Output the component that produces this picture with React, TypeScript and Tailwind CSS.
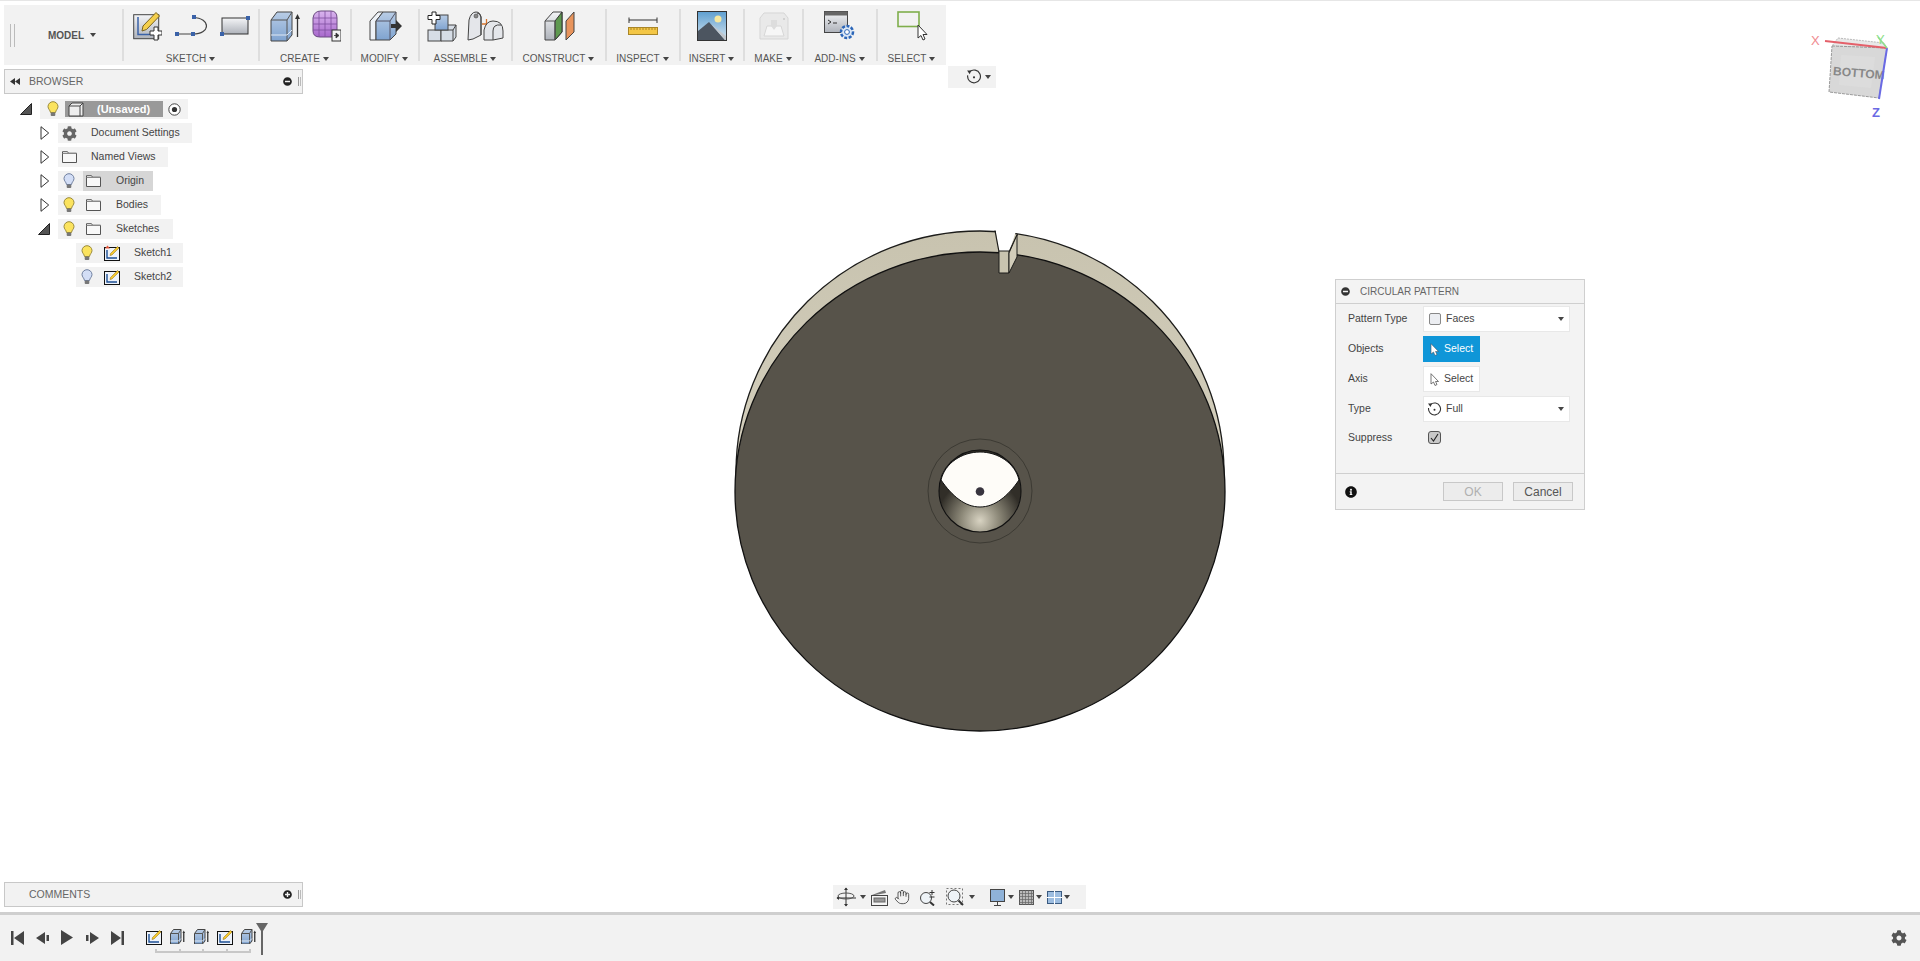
import type { ReactNode } from "react";
import { FaCog, FaInfoCircle, FaMinusCircle, FaPlusCircle } from "react-icons/fa";
import { Hand } from "lucide-react";

function Ico({ w, h, children, className }: { w: number; h: number; children: ReactNode; className?: string }) {
  return (
    <svg width={w} height={h} viewBox={`0 0 ${w} ${h}`} className={`shrink-0 ${className ?? ""}`}>
      {children}
    </svg>
  );
}

function Caret({ className }: { className?: string }) {
  return (
    <Ico w={6} h={4} className={className}>
      <path d="M0 0H6L3 4Z" fill="#444" />
    </Ico>
  );
}

function Defs() {
  return (
    <svg className="absolute w-0 h-0">
      <defs>
        <linearGradient id="blueBox" x1="0" y1="0" x2="0" y2="1">
          <stop offset="0" stopColor="#b9cde6" />
          <stop offset="1" stopColor="#7fa3d0" />
        </linearGradient>
        <linearGradient id="greyBox" x1="0" y1="0" x2="0" y2="1">
          <stop offset="0" stopColor="#f4f5f7" />
          <stop offset="1" stopColor="#aeb2ba" />
        </linearGradient>
        <linearGradient id="purple" x1="0" y1="0" x2="0" y2="1">
          <stop offset="0" stopColor="#d9b4ee" />
          <stop offset="1" stopColor="#a868cc" />
        </linearGradient>
        <linearGradient id="sky" x1="0" y1="0" x2="0" y2="1">
          <stop offset="0" stopColor="#5f9fd0" />
          <stop offset="1" stopColor="#d6e6f0" />
        </linearGradient>
        <radialGradient id="hole" cx="0.5" cy="0.86" r="0.52">
          <stop offset="0" stopColor="#d8d3c2" />
          <stop offset="0.45" stopColor="#8c8878" />
          <stop offset="1" stopColor="#312e28" />
        </radialGradient>
        <linearGradient id="rim" x1="0" y1="1" x2="0" y2="0">
          <stop offset="0.5" stopColor="#d4cfbd" />
          <stop offset="1" stopColor="#c8c3af" />
        </linearGradient>
      </defs>
    </svg>
  );
}

/* small tree icons */
function Bulb({ off }: { off?: boolean }) {
  return (
    <Ico w={12} h={16}>
      <path
        d="M6 .7A5 5 0 0 1 11 5.5C11 8 8.8 9 8.5 11.5H3.5C3.2 9 1 8 1 5.5A5 5 0 0 1 6 .7Z"
        fill={off ? "#d3def6" : "#fbe35e"}
        stroke={off ? "#6f7f9f" : "#9a8a3a"}
      />
      <rect x="3.7" y="11.5" width="4.6" height="3.6" rx="1" fill="#777" />
    </Ico>
  );
}

function Folder() {
  return (
    <Ico w={15} h={12}>
      <path d="M.5 11.5V.7H5.5L6.5 2.2H14.5V11.5Z" fill="#f8f8f8" stroke="#555" />
      <path d="M.5 2.5H14.5" stroke="#888" />
    </Ico>
  );
}

function SketchSmall({ warn, w = 16 }: { warn?: boolean; w?: number }) {
  return (
    <Ico w={w} h={16}>
      <rect x=".5" y="2.5" width="15" height="13" fill="#eef3fa" stroke="#111" />
      <path d="M3 5V13H13" stroke="#1d4f94" strokeWidth="1.4" fill="none" />
      <path d="M6 10.5L6.5 8.5L13.5 1.5L15 3L8 10Z" fill="#f6c92e" stroke="#8a6a10" strokeWidth=".5" />
      {warn && <path d="M1 3.5L3.5 .5L6 3.5Z" fill="#e5583c" />}
    </Ico>
  );
}

function Tri({ open }: { open?: boolean }) {
  return open ? (
    <Ico w={12} h={12}>
      <path d="M.5 11.5L11.5 .5V11.5Z" fill="#555" stroke="#222" />
    </Ico>
  ) : (
    <Ico w={10} h={14}>
      <path d="M1 .7L8.7 7L1 13.3Z" fill="#fff" stroke="#333" />
    </Ico>
  );
}

function TreeRow({
  indent,
  tri,
  open,
  bulb,
  off,
  icon,
  label,
  width,
  active,
}: {
  indent: number;
  tri?: boolean;
  open?: boolean;
  bulb?: boolean;
  off?: boolean;
  icon: ReactNode;
  label: string;
  width: number;
  active?: boolean;
}) {
  return (
    <div className="flex items-center h-5" style={{ paddingLeft: indent }}>
      <div className="w-[20px] flex justify-end pr-[8px] shrink-0">{tri && <Tri open={open} />}</div>
      <div className="flex items-center h-5 bg-[#f2f2f2]" style={{ width }}>
        {bulb && (
          <div className="w-[25px] flex justify-center pr-[3px] shrink-0">
            <Bulb off={off} />
          </div>
        )}
        <div className={`flex items-center h-5 grow ${bulb ? "" : "pl-[3px]"} ${active ? "bg-[#d6d6d6]" : ""}`}>
          <div className={`flex justify-center shrink-0 ${bulb ? "w-[20px] pl-[1px]" : "w-[17px]"}`}>{icon}</div>
          <span className="ml-[13px] text-[10.5px] text-[#444]">{label}</span>
        </div>
      </div>
    </div>
  );
}

function Tree() {
  return (
    <div className="flex flex-col gap-1 pt-[5px]">
      <div className="flex items-center h-5 pl-[16px]">
        <div className="w-[20px] shrink-0">
          <Tri open />
        </div>
        <div className="flex items-center h-5 w-[148px] bg-[#f2f2f2]">
          <div className="w-[25px] flex justify-center shrink-0">
            <Bulb />
          </div>
          <div className="flex items-center h-4 w-[98px] bg-[#999]">
            <Ico w={16} h={15} className="ml-[3px]">
              <path d="M1 14V4L4 1H15V14Z" fill="#eee" stroke="#444" />
              <path d="M1 4H12V14M12 4L15 1" fill="none" stroke="#444" />
            </Ico>
            <span className="ml-[13px] text-[11px] font-bold text-white">(Unsaved)</span>
          </div>
          <Ico w={13} h={13} className="ml-[5px]">
            <circle cx="6.5" cy="6.5" r="5.7" fill="#fff" stroke="#444" />
            <circle cx="6.5" cy="6.5" r="2.6" fill="#333" />
          </Ico>
        </div>
      </div>
      <TreeRow indent={34} tri icon={<FaCog size={15} color="#666" />} label="Document Settings" width={134} />
      <TreeRow indent={34} tri icon={<Folder />} label="Named Views" width={110} />
      <TreeRow indent={34} tri bulb off active icon={<Folder />} label="Origin" width={95} />
      <TreeRow indent={34} tri bulb icon={<Folder />} label="Bodies" width={103} />
      <TreeRow indent={34} tri open bulb icon={<Folder />} label="Sketches" width={115} />
      <TreeRow indent={52} bulb icon={<SketchSmall warn />} label="Sketch1" width={107} />
      <TreeRow indent={52} bulb off icon={<SketchSmall />} label="Sketch2" width={107} />
    </div>
  );
}

function PanelBar({ label, icon, left }: { label: string; icon: ReactNode; left?: ReactNode }) {
  return (
    <div className="flex items-center h-[25px] w-[299px] border border-[#c8c8c8] bg-[#f2f2f2]">
      <div className="w-[24px] pl-[5px] shrink-0">{left}</div>
      <span className="text-[10.5px] text-[#666]">{label}</span>
      <div className="ml-auto mr-[6px]">{icon}</div>
      <div className="flex gap-[1px] mr-[1px]">
        <div className="w-px h-[9px] bg-[#999]" />
        <div className="w-px h-[9px] bg-[#bbb]" />
      </div>
    </div>
  );
}

/* toolbar icons */
function SketchCreate() {
  return (
    <Ico w={29} h={30}>
      <rect x=".7" y="3.7" width="25" height="24" fill="url(#greyBox)" stroke="#444" />
      <path d="M5 6V23.5H20" stroke="#3a62a8" strokeWidth="1.5" fill="none" />
      <path d="M9 20L10 15L23 1.5L26.5 5L13.5 18.5Z" fill="#f4cf4c" stroke="#7a6320" />
      <path d="M17 20H21V16H25V20H29V24H25V29H21V24H17Z" fill="#fff" stroke="#333" />
    </Ico>
  );
}

function LineArc() {
  return (
    <Ico w={32} h={22}>
      <path d="M2 19H18M18 2.5C36 3 36 19 18 19" fill="none" stroke="#444" strokeWidth="1.2" />
      <rect x="0" y="17" width="4" height="4" fill="#3a62a8" />
      <rect x="16" y="17" width="4" height="4" fill="#3a62a8" />
      <rect x="17" y="0" width="4" height="4" fill="#3a62a8" />
    </Ico>
  );
}

function RectIcon() {
  return (
    <Ico w={30} h={22}>
      <rect x="2" y="3" width="26" height="16" fill="url(#greyBox)" stroke="#333" />
      <rect x="0" y="17" width="4" height="4" fill="#3a62a8" />
      <rect x="26" y="1" width="4" height="4" fill="#3a62a8" />
    </Ico>
  );
}

function Extrude({ scale = 1 }: { scale?: number }) {
  const w = 31 * scale;
  const h = 31 * scale;
  return (
    <svg width={w} height={h} viewBox="0 0 31 31" className="shrink-0">
      <path d="M1 9L7 1H22V24L17 30H1Z" fill="url(#blueBox)" stroke="#444" strokeWidth={1 / scale} />
      <path d="M1 9H17V30M17 9L22 1" fill="none" stroke="#555" strokeWidth={1 / scale} />
      <path d="M1 24H17L22 19" fill="none" stroke="#dfe8f2" strokeWidth={1 / scale} />
      <path d="M27.5 26V6" stroke="#333" strokeWidth={1.3 / scale} />
      <path d="M25 8L27.5 3L30 8Z" fill="#333" />
    </svg>
  );
}

function Mesh() {
  return (
    <Ico w={29} h={32}>
      <path d="M1 8Q2 1 9 1H19Q25 1 25 8V22Q25 27 19 27H8Q1 27 1 21Z" fill="url(#purple)" stroke="#6a4a80" />
      <path d="M7 1.5V27M13 1V27M19 1V27M1 8H25M1 14H25M1 20H25" stroke="#7d4fa0" strokeWidth=".8" fill="none" />
      <rect x="20" y="20" width="9" height="11" fill="#f4f4f4" stroke="#333" />
      <path d="M22 25.5H25M24 23L27 25.5L24 28Z" fill="#333" stroke="#333" strokeWidth=".8" />
    </Ico>
  );
}

function Modify() {
  return (
    <Ico w={33} h={31}>
      <path d="M1 29V10L9 1H14L7 10V29Z" fill="#eef2f7" stroke="#444" />
      <path d="M7 29V10L14 1H27V23L21 29Z" fill="url(#blueBox)" stroke="#444" />
      <path d="M7 10H21V29M21 10L27 1" fill="none" stroke="#556" />
      <path d="M22 13H27V9L33 15L27 21V17H22Z" fill="#333" />
    </Ico>
  );
}

function NewComponent() {
  return (
    <Ico w={30} h={31}>
      <rect x="1" y="19" width="13" height="11" fill="#d6dde6" stroke="#444" />
      <path d="M14 30V19L20 14H29V26L26 30Z" fill="#d6dde6" stroke="#444" />
      <path d="M14 19H26V30M26 19L29 14" fill="none" stroke="#444" />
      <rect x="8" y="4" width="13" height="15" fill="url(#blueBox)" stroke="#444" />
      <path d="M5 1H9V4.500H13V8.500H9V13H5V8.500H1V4.500H5Z" fill="#fff" stroke="#222" />
    </Ico>
  );
}

function Joint() {
  return (
    <Ico w={37} h={30}>
      <path d="M1 29L2 9Q4 1 9 1Q13 1 14 6V24L6 28Z" fill="#e4e6ea" stroke="#444" />
      <path d="M14 24V6Q13 2 10 2" fill="none" stroke="#444" />
      <circle cx="9" cy="5" r="2" fill="#888" stroke="#444" strokeWidth=".6" />
      <path d="M15 13H24M19.500 8V25" stroke="#d9762e" strokeWidth="1.3" />
      <path d="M17 29V19Q19 10 26 10Q36 10 36 20V27L26 29Z" fill="#e4e6ea" stroke="#444" />
      <path d="M26 29V20Q26 13 34 14" fill="none" stroke="#444" />
    </Ico>
  );
}

function Construct() {
  return (
    <Ico w={31} h={30}>
      <path d="M1 29V10L9 1H18V21L11 29Z" fill="url(#greyBox)" stroke="#444" />
      <path d="M11 10L18 1V21L11 29Z" fill="#5e9950" stroke="#333" />
      <path d="M1 10H11V29" fill="none" stroke="#555" />
      <path d="M22 29V10L30 1V21Z" fill="#e8945c" stroke="#444" />
    </Ico>
  );
}

function Ruler() {
  return (
    <Ico w={30} h={18}>
      <path d="M1 3H29M1 .5V6M29 .5V6" stroke="#333" fill="none" />
      <rect x=".5" y="10.500" width="29" height="7" fill="#f4c746" stroke="#a98628" />
      <path d="M3 11V13M6 11V13M9 11V13M12 11V13M15 11V13M18 11V13M21 11V13M24 11V13M27 11V13" stroke="#8a6a18" strokeWidth=".7" />
    </Ico>
  );
}

function Picture() {
  return (
    <Ico w={30} h={30}>
      <rect x=".5" y=".5" width="29" height="29" fill="url(#sky)" stroke="#333" />
      <circle cx="21" cy="8" r="3.500" fill="#f6e8a0" />
      <path d="M1 29V20L12 11L28 29Z" fill="#4c5560" />
      <path d="M14 13L29 25V29H28Z" fill="#c0c6cc" />
    </Ico>
  );
}

function Make() {
  return (
    <Ico w={30} h={28} className="opacity-80">
      <path d="M1 27V6L5 1H25L29 6V27Z" fill="#e8e8e8" stroke="#cfcfcf" />
      <path d="M5 24L8 14H22L25 24Z" fill="#f8f8f8" stroke="#d0d0d0" />
      <path d="M12 8H18V14L15 18L12 14Z" fill="#d8d8d8" />
      <circle cx="25" cy="7" r="1" fill="#c0c0c0" />
    </Ico>
  );
}

function AddIns() {
  return (
    <Ico w={32} h={30}>
      <rect x=".5" y=".5" width="23" height="21" fill="url(#greyBox)" stroke="#444" />
      <rect x=".5" y=".5" width="23" height="4" fill="#666" />
      <path d="M4 9L7 11L4 13M9 12H13" fill="none" stroke="#333" />
      <g transform="translate(23 21)">
        <circle r="6" fill="#dce8f6" stroke="#2c66b8" strokeWidth="2.500" strokeDasharray="3 1.500" />
        <circle r="2.400" fill="#fff" stroke="#2c66b8" />
      </g>
    </Ico>
  );
}

function SelectIcon() {
  return (
    <Ico w={31} h={31}>
      <rect x="1" y="1" width="21" height="14.500" fill="none" stroke="#7fae4c" strokeWidth="1.600" />
      <path d="M21 14V27L24 24.500L26 29L28 28L26 23.500H30Z" fill="#fff" stroke="#333" />
    </Ico>
  );
}

function Group({ label, width, children, gap }: { label: string; width: number; children: ReactNode; gap: number }) {
  return (
    <div className="flex items-stretch shrink-0" style={{ width }}>
      <div className="w-[2px] my-[4px] bg-[#dedede] shrink-0" />
      <div className="flex flex-col items-center grow">
        <div className="flex items-center justify-center h-[40px] mt-[1px]" style={{ gap }}>
          {children}
        </div>
        <div className="flex items-center gap-[3px] mt-[6px] pr-[1px]">
          <span className="text-[10px] text-[#555] leading-[13px]">{label}</span>
          <Caret />
        </div>
      </div>
    </div>
  );
}

function Toolbar() {
  return (
    <div className="flex w-[942px] h-[60px] bg-[#f2f2f2] shrink-0">
      <div className="flex items-center w-[118px] shrink-0 pl-[6px]">
        <div className="flex gap-[3px]">
          <div className="w-px h-[23px] bg-[#bbb]" />
          <div className="w-px h-[23px] bg-[#bbb]" />
        </div>
        <span className="ml-[33px] text-[10px] font-bold text-[#555]">MODEL</span>
        <Caret className="ml-[6px]" />
      </div>
      <Group label="SKETCH" width={136} gap={13}>
        <SketchCreate />
        <LineArc />
        <RectIcon />
      </Group>
      <Group label="CREATE" width={92} gap={11}>
        <Extrude />
        <Mesh />
      </Group>
      <Group label="MODIFY" width={68} gap={0}>
        <Modify />
      </Group>
      <Group label="ASSEMBLE" width={93} gap={10}>
        <NewComponent />
        <Joint />
      </Group>
      <Group label="CONSTRUCT" width={94} gap={0}>
        <Construct />
      </Group>
      <Group label="INSPECT" width={74} gap={0}>
        <Ruler />
      </Group>
      <Group label="INSERT" width={64} gap={0}>
        <Picture />
      </Group>
      <Group label="MAKE" width={59} gap={0}>
        <Make />
      </Group>
      <Group label="ADD-INS" width={74} gap={0}>
        <AddIns />
      </Group>
      <Group label="SELECT" width={70} gap={0}>
        <SelectIcon />
      </Group>
    </div>
  );
}

function RotateMark({ size = 15 }: { size?: number }) {
  return (
    <svg width={size} height={size} viewBox="0 0 15 15" className="shrink-0">
      <path d="M3.500 2.500A6 6 0 1 1 1.600 6" fill="none" stroke="#333" strokeWidth="1.100" />
      <path d="M1 1.500L5 1.500L3.500 5Z" fill="#333" />
      <circle cx="7.500" cy="7.800" r="1" fill="#333" />
    </svg>
  );
}

/* the part on the canvas */
function Model() {
  return (
    <svg className="absolute left-0 top-0" width={1920} height={961} viewBox="0 0 1920 961">
      <ellipse cx="980" cy="471" rx="244" ry="241" fill="url(#rim)" stroke="#1c1c1a" strokeWidth="1.300" />
      <path d="M995 225L999 251H1009L1017.500 226Z" fill="#fff" />
      <path d="M995 229.500L999 251M1009 251L1017.500 233" stroke="#1c1c1a" strokeWidth="1.200" fill="none" />
      <ellipse cx="980" cy="490.500" rx="245" ry="239.500" fill="#57534a" stroke="#111" strokeWidth="1.300" />
      <path d="M999 250H1009V272H999Z" fill="#c9c4b0" stroke="#1c1c1a" />
      <path d="M1009 252L1017 234V256L1009 272Z" fill="#d2cdba" stroke="#1c1c1a" />
      <circle cx="980" cy="490" r="52" fill="none" stroke="#3c3a33" strokeWidth="1" />
      <circle cx="980" cy="490" r="41" fill="url(#hole)" stroke="#111" strokeWidth="1.100" />
      <path
        d="M941 479C945 462 962 451 980 451C998 451 1015 462 1019 479C1008 495 995 506 980 506C965 506 952 495 941 479Z"
        fill="#fefcf8"
        stroke="#111"
        strokeWidth="1"
      />
      <circle cx="980" cy="490.500" r="4.300" fill="#38343e" />
    </svg>
  );
}

function ViewCube() {
  return (
    <svg className="absolute left-[1805px] top-[25px]" width={95} height={100} viewBox="1805 25 95 100">
      <path d="M1838 37L1884 42L1887 47L1832 45Z" fill="#e8e8e8" stroke="#bbb" strokeDasharray="2 1" />
      <path d="M1832 45L1887 47L1879 97L1829 91Z" fill="#d8d8d8" stroke="#999" strokeDasharray="3 1" />
      <path d="M1841 54L1875 56L1871 87L1839 84Z" fill="#dcdcdc" />
      <text x="1833" y="76" fontSize="12" fontWeight="700" fill="#888" fontFamily="Liberation Sans" transform="rotate(5 1857 72)">
        BOTTOM
      </text>
      <path d="M1825 40L1887 47" stroke="#e4606a" strokeWidth="2" />
      <path d="M1887 47L1879 98" stroke="#6a6ae4" strokeWidth="2" />
      <path d="M1887 47L1878 36" stroke="#8ee08a" strokeWidth="1.500" />
      <text x="1811" y="44" fontSize="13" fill="#f08a90" fontFamily="Liberation Sans">X</text>
      <text x="1876" y="43" fontSize="13" fill="#8ee08a" fontFamily="Liberation Sans">Y</text>
      <text x="1872" y="116" fontSize="13" fontWeight="700" fill="#6a6ae4" fontFamily="Liberation Sans">Z</text>
    </svg>
  );
}

function Dialog() {
  const label = "w-[75px] text-[10.5px] text-[#444] shrink-0";
  const input = "flex items-center h-[26px] bg-white border border-[#e8e8e8]";
  return (
    <div className="absolute left-[1335px] top-[278px] w-[250px] h-[231px] flex flex-col border border-[#cfcfcf] bg-[#f3f3f3]">
      <div className="flex items-center h-[24px] border-b border-[#cfcfcf] pl-[5px] pb-[1px] shrink-0">
        <FaMinusCircle size={9} color="#333" />
        <span className="ml-[10px] text-[10px] text-[#666]">CIRCULAR PATTERN</span>
      </div>
      <div className="flex flex-col gap-[4px] pl-[12px] pt-[2px] grow">
        <div className="flex items-center">
          <span className={label}>Pattern Type</span>
          <div className={`${input} w-[147px] pl-[5px]`}>
            <div className="w-[12px] h-[12px] rounded-[2px] border border-[#888] bg-[#eceef2]" />
            <span className="ml-[5px] text-[10.5px] text-[#444]">Faces</span>
            <Caret className="ml-auto mr-[5px]" />
          </div>
        </div>
        <div className="flex items-center">
          <span className={label}>Objects</span>
          <div className="flex items-center h-[26px] w-[57px] bg-[#0f96d8] pl-[7px]">
            <Ico w={9} h={13}>
              <path d="M1 .7V11L3.500 9L5 12.500L7 11.500L5.500 8.500H8.500Z" fill="#fff" stroke="#456" strokeWidth=".6" />
            </Ico>
            <span className="ml-[5px] text-[10.5px] text-white">Select</span>
          </div>
        </div>
        <div className="flex items-center">
          <span className={label}>Axis</span>
          <div className={`${input} w-[57px] pl-[6px]`}>
            <Ico w={9} h={13}>
              <path d="M1 .7V11L3.500 9L5 12.500L7 11.500L5.500 8.500H8.500Z" fill="#fff" stroke="#555" strokeWidth=".8" />
            </Ico>
            <span className="ml-[5px] text-[10.5px] text-[#444]">Select</span>
          </div>
        </div>
        <div className="flex items-center">
          <span className={label}>Type</span>
          <div className={`${input} w-[147px] pl-[3px]`}>
            <RotateMark />
            <span className="ml-[4px] text-[10.5px] text-[#444]">Full</span>
            <Caret className="ml-auto mr-[5px]" />
          </div>
        </div>
        <div className="flex items-center mt-[4px]">
          <span className={label}>Suppress</span>
          <div className="flex items-center justify-center w-[13px] h-[13px] ml-[5px] rounded-[3px] border border-[#555] bg-[#c8c8c8]">
            <Ico w={9} h={9}>
              <path d="M1 5L3.500 8L8 1" fill="none" stroke="#222" strokeWidth="1.100" />
            </Ico>
          </div>
        </div>
      </div>
      <div className="flex items-center h-[36px] border-t border-[#cfcfcf] pl-[9px] pr-[11px] shrink-0">
        <FaInfoCircle size={12} color="#111" />
        <div className="ml-auto flex items-center justify-center w-[60px] h-[19px] border border-[#c8c8c8] bg-[#ececec] text-[12px] text-[#b0b0b0]">OK</div>
        <div className="ml-[10px] flex items-center justify-center w-[60px] h-[19px] border border-[#c8c8c8] bg-[#ececec] text-[12px] text-[#555]">Cancel</div>
      </div>
    </div>
  );
}

function NavBar() {
  return (
    <div className="absolute left-[833px] top-[884px] w-[253px] h-[24px] flex items-center bg-[#f2f2f2] pl-[3px]">
      <Ico w={22} h={20}>
        <path d="M10 1V19M1 11H20" stroke="#333" />
        <path d="M8 3L10 .5L12 3ZM3 9L.5 11L3 13ZM8 17L10 19.500L12 17Z" fill="#333" />
        <ellipse cx="10" cy="9" rx="8" ry="3" fill="none" stroke="#555" />
      </Ico>
      <Caret className="ml-[2px]" />
      <Ico w={18} h={17} className="ml-[5px]">
        <rect x=".5" y="6.500" width="16" height="10" fill="#f4f4f4" stroke="#444" />
        <rect x="3" y="9" width="11" height="4" fill="#999" stroke="#666" />
        <path d="M1 6L14 1L15 4L4 6Z" fill="#777" />
      </Ico>
      <Hand size={16} strokeWidth={1.2} color="#333" className="ml-[5px] shrink-0" />
      <Ico w={18} h={17} className="ml-[9px]">
        <circle cx="7" cy="9" r="5.500" fill="#eef3f7" stroke="#444" />
        <path d="M11 13L15 16.500" stroke="#333" strokeWidth="2" />
        <path d="M13 1V6M10.500 3.500H15.500M10.500 8H15.500" stroke="#333" />
      </Ico>
      <Ico w={18} h={18} className="ml-[9px]">
        <rect x=".5" y=".5" width="16" height="16" fill="none" stroke="#777" strokeDasharray="2 2" />
        <circle cx="8" cy="8" r="6" fill="#eef3f7" stroke="#444" />
        <path d="M12.500 12.500L17 17" stroke="#333" strokeWidth="2" />
      </Ico>
      <Caret className="ml-[5px]" />
      <Ico w={15} h={17} className="ml-[15px]">
        <rect x=".5" y=".5" width="14" height="12" fill="#8fb2d8" stroke="#444" />
        <path d="M7.500 13V16M4 16.500H11" stroke="#444" />
      </Ico>
      <Caret className="ml-[3px]" />
      <Ico w={15} h={15} className="ml-[5px]">
        <rect x=".5" y=".5" width="14" height="14" fill="#bbb" stroke="#555" />
        <path d="M3.500 0V15M6.500 0V15M9.500 0V15M12.500 0V15M0 3.500H15M0 6.500H15M0 9.500H15M0 12.500H15" stroke="#666" strokeWidth=".7" />
      </Ico>
      <Caret className="ml-[2px]" />
      <Ico w={15} h={13} className="ml-[5px]">
        <rect x=".5" y=".5" width="14" height="12" fill="#9dbde0" stroke="#3a5a80" />
        <path d="M7.500 0V13M0 6.500H15" stroke="#fff" />
      </Ico>
      <Caret className="ml-[2px]" />
    </div>
  );
}

function Playback() {
  const step = "w-[24px] flex justify-center";
  return (
    <div className="flex items-center h-[16px] pl-[5px] shrink-0">
      <div className={step}>
        <Ico w={13} h={14}>
          <path d="M0 0H2.500V14H0ZM13 0V14L3 7Z" fill="#444" />
        </Ico>
      </div>
      <div className={`${step} ml-[1px]`}>
        <Ico w={13} h={14}>
          <path d="M9 1V13L0 7ZM10.500 4H13V10H10.500Z" fill="#444" />
        </Ico>
      </div>
      <div className={`${step} ml-[1px]`}>
        <Ico w={12} h={15}>
          <path d="M0 0L12 7.500L0 15Z" fill="#444" />
        </Ico>
      </div>
      <div className={`${step} ml-[1px]`}>
        <Ico w={13} h={14}>
          <path d="M4 1V13L13 7ZM0 4H2.500V10H0Z" fill="#444" />
        </Ico>
      </div>
      <div className={`${step} ml-[1px]`}>
        <Ico w={13} h={14}>
          <path d="M0 0L10 7L0 14ZM10.500 0H13V14H10.500Z" fill="#444" />
        </Ico>
      </div>
    </div>
  );
}

function Timeline() {
  return (
    <div className="flex items-center h-[49px] shrink-0 border-t-[3px] border-[#cfcfcf] bg-[#f2f2f2] pb-[1px]">
      <Playback />
      <div className="relative flex items-center gap-[8px] ml-[17px] -mt-[2px]">
        <SketchSmall />
        <Extrude scale={0.5} />
        <Extrude scale={0.5} />
        <SketchSmall />
        <Extrude scale={0.5} />
        {/* connector under the features */}
        <div className="absolute left-[9px] top-[20px] w-[96px] h-[4px] flex justify-between border-b-2 border-[#c8c8c8]">
          <div className="w-[2px] bg-[#c8c8c8]" />
          <div className="w-[2px] bg-[#c8c8c8]" />
          <div className="w-[2px] bg-[#c8c8c8]" />
          <div className="w-[2px] bg-[#c8c8c8]" />
          <div className="w-[2px] bg-[#c8c8c8]" />
        </div>
        {/* position marker */}
        <svg className="absolute left-[110px] -top-[6px]" width={12} height={32} viewBox="0 0 12 32">
          <path d="M0 0H12L7 8V32H5V8Z" fill="#666" />
        </svg>
      </div>
      <FaCog size={16} color="#555" className="ml-auto mr-[13px]" />
    </div>
  );
}

export default function App() {
  return (
    <div className="relative flex flex-col w-full h-[961px] overflow-hidden bg-white border-t border-[#e6e6e6] font-['Liberation_Sans',sans-serif]">
      <Defs />
      <Model />
      <ViewCube />
      <div className="relative flex flex-col flex-1 min-h-0 pl-1 pt-1">
        <Toolbar />
        <div className="flex flex-1 min-h-0">
          <div className="flex flex-col w-[299px] pt-[4px] pb-[5px]">
            <PanelBar
              label="BROWSER"
              left={
                <Ico w={10} h={7}>
                  <path d="M5 0V7L0 3.500ZM10 0V7L5 3.500Z" fill="#333" />
                </Ico>
              }
              icon={<FaMinusCircle size={9} color="#222" />}
            />
            <Tree />
            <div className="mt-auto">
              <PanelBar label="COMMENTS" icon={<FaPlusCircle size={9} color="#222" />} />
            </div>
          </div>
          <div className="flex items-center gap-[3px] w-[48px] h-[22px] ml-[645px] mt-[1px] bg-[#f2f2f2] pl-[18px]">
            <RotateMark size={16} />
            <Caret />
          </div>
        </div>
      </div>
      <Timeline />
      <Dialog />
      <NavBar />
    </div>
  );
}
